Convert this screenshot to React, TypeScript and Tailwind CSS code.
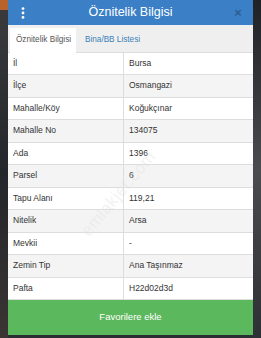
const rows: [string, string][] = [
  ["İl", "Bursa"],
  ["İlçe", "Osmangazi"],
  ["Mahalle/Köy", "Koğukçınar"],
  ["Mahalle No", "134075"],
  ["Ada", "1396"],
  ["Parsel", "6"],
  ["Tapu Alanı", "119,21"],
  ["Nitelik", "Arsa"],
  ["Mevkii", "-"],
  ["Zemin Tip", "Ana Taşınmaz"],
  ["Pafta", "H22d02d3d"],
];

const App = () => {
  return (
    <div
      className="relative w-[261px] h-[338px] overflow-hidden bg-[#2b2e32]"
      style={{ fontFamily: '"Liberation Sans", Arial, sans-serif' }}
    >
      {/* blurred map behind the modal */}
      <div className="absolute left-0 top-0 w-[8px] h-[10px] bg-[#b9622c]" />
      <div className="absolute left-0 top-[10px] w-[8px] h-[328px] bg-gradient-to-b from-[#3a3a3c] via-[#23262b] to-[#3b3433]" />
      <div className="absolute right-0 top-0 w-[8px] h-[338px] bg-gradient-to-b from-[#1f2226] via-[#4a4c4f] to-[#2d3034]" />

      <div className="relative ml-[8px] w-[245px] flex flex-col">
        <div className="h-[25px] bg-[#3b80c6] flex items-center">
          <div className="w-[30px] flex justify-center">
            <svg width="4" height="12" viewBox="0 0 4 12">
              <circle cx="2" cy="1.6" r="1.4" fill="#fff" />
              <circle cx="2" cy="6" r="1.4" fill="#fff" />
              <circle cx="2" cy="10.4" r="1.4" fill="#fff" />
            </svg>
          </div>
          <div className="flex-1 text-center text-white text-[12.5px] leading-none">
            Öznitelik Bilgisi
          </div>
          <div className="w-[30px] flex justify-center text-[#2b5f91] text-[13px] font-bold leading-none">
            ×
          </div>
        </div>

        <div className="h-[27.5px] bg-[#efefef] pl-[2px] pt-[3px] flex border-b border-[#dddddd]">
          <div className="w-[66px] h-[25px] bg-white flex items-center pl-[6px] text-[8.2px] text-[#555555]">
            Öznitelik Bilgisi
          </div>
          <div className="flex items-center pl-[9px] text-[8.2px] text-[#3c7fb8]">
            Bina/BB Listesi
          </div>
        </div>

        <div className="relative bg-white">
          {rows.map(([label, value], i) => (
            <div
              key={label}
              className={`grid grid-cols-[116px_1fr] h-[22.5px] border-b border-[#dddddd] text-[8.5px] text-[#333333] ${
                i % 2 === 1 ? "bg-[#f4f4f4]" : "bg-white"
              }`}
            >
              <div className="flex items-center pl-[5px] border-r border-[#dddddd]">{label}</div>
              <div className="flex items-center pl-[5px]">{value}</div>
            </div>
          ))}
          <span className="pointer-events-none absolute left-[58px] top-[128px] -rotate-[50deg] text-[17px] text-[#e2e2e2] opacity-40 tracking-wide">
            emlakjet.com
          </span>
        </div>

        <div className="h-[34.5px] bg-[#5cb85c] flex items-center justify-center text-white text-[9.5px]">
          Favorilere ekle
        </div>
      </div>
    </div>
  );
};

export default App;
